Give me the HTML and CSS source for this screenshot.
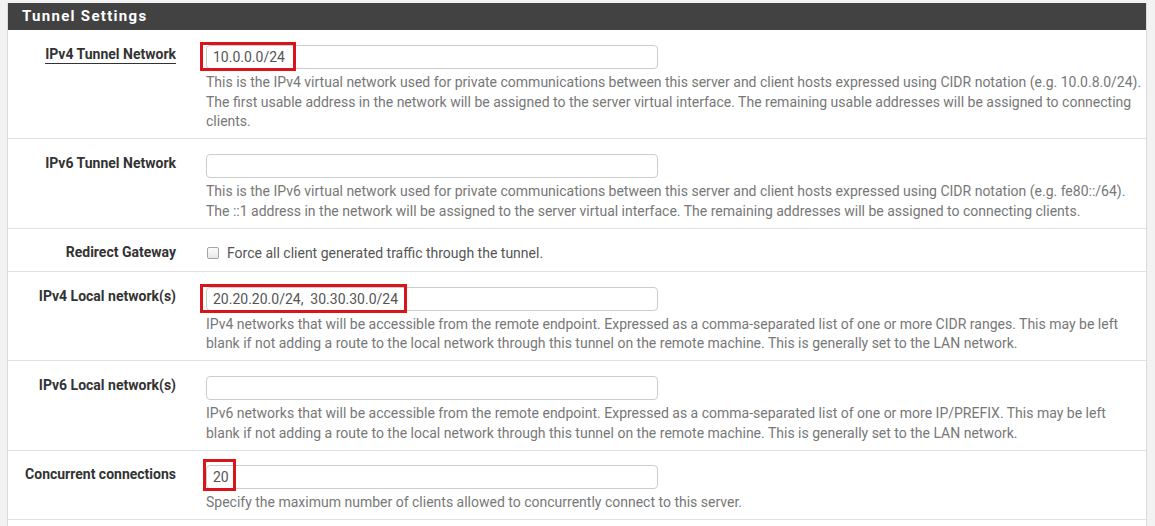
FILE: index.html
```html
<!DOCTYPE html>
<html>
<head>
<meta charset="utf-8">
<link rel="stylesheet" href="styles.css">
</head>
<body>
<div class="panel">
  <div class="panel-heading">Tunnel Settings</div>
  <div class="panel-body">
    <div class="row">
      <div class="label"><span class="underline">IPv4 Tunnel Network</span></div>
      <div class="control">
        <div class="field hl hl-1"><input class="input" type="text" value="10.0.0.0/24"></div>
        <div class="help">This is the IPv4 virtual network used for private communications between this server and client hosts expressed using CIDR notation (e.g. 10.0.8.0/24). The first usable address in the network will be assigned to the server virtual interface. The remaining usable addresses will be assigned to connecting clients.</div>
      </div>
    </div>
    <div class="row">
      <div class="label">IPv6 Tunnel Network</div>
      <div class="control">
        <div class="field"><input class="input" type="text" value=""></div>
        <div class="help">This is the IPv6 virtual network used for private communications between this server and client hosts expressed using CIDR notation (e.g. fe80::/64). The ::1 address in the network will be assigned to the server virtual interface. The remaining addresses will be assigned to connecting clients.</div>
      </div>
    </div>
    <div class="row row-check">
      <div class="label">Redirect Gateway</div>
      <div class="control">
        <label class="check"><span class="box"></span>Force all client generated traffic through the tunnel.</label>
      </div>
    </div>
    <div class="row">
      <div class="label">IPv4 Local network(s)</div>
      <div class="control">
        <div class="field hl hl-4"><input class="input" type="text" value="20.20.20.0/24,  30.30.30.0/24"></div>
        <div class="help">IPv4 networks that will be accessible from the remote endpoint. Expressed as a comma-separated list of one or more CIDR ranges. This may be left<br>blank if not adding a route to the local network through this tunnel on the remote machine. This is generally set to the LAN network.</div>
      </div>
    </div>
    <div class="row">
      <div class="label">IPv6 Local network(s)</div>
      <div class="control">
        <div class="field"><input class="input" type="text" value=""></div>
        <div class="help">IPv6 networks that will be accessible from the remote endpoint. Expressed as a comma-separated list of one or more IP/PREFIX. This may be left<br>blank if not adding a route to the local network through this tunnel on the remote machine. This is generally set to the LAN network.</div>
      </div>
    </div>
    <div class="row row-last">
      <div class="label">Concurrent connections</div>
      <div class="control">
        <div class="field hl hl-6"><input class="input" type="text" value="20"></div>
        <div class="help">Specify the maximum number of clients allowed to concurrently connect to this server.</div>
      </div>
    </div>
    <div class="row row-next"></div>
  </div>
</div>
</body>
</html>
```

FILE: styles.css
```css
html, body {
  margin: 0;
  padding: 0;
}
body {
  background: #f2f2f2;
  font-family: Roboto, "Liberation Sans", Arial, sans-serif;
  font-size: 14px;
  color: #333;
  padding: 3px 8px 0 7px;
}
.panel {
  background: #fff;
  border-left: 1px solid #dcdcdc;
  border-right: 1px solid #dcdcdc;
}
.panel-heading {
  background: #424242;
  color: #fff;
  font-weight: bold;
  font-size: 15px;
  letter-spacing: 1.3px;
  height: 27px;
  line-height: 27px;
  padding-left: 14px;
}
.row {
  display: grid;
  grid-template-columns: 183px 1fr;
  border-bottom: 1px solid #e0e0e0;
  padding: 15px 0 6.5px;
}
.row-check {
  padding: 14px 0 8px;
}
.row-last {
  padding-top: 14.5px;
}
.row-next {
  border-bottom: none;
  height: 12px;
  padding: 0;
}
.label {
  text-align: right;
  padding-right: 15px;
  font-weight: bold;
  line-height: 18px;
  color: #333;
}
.underline {
  border-bottom: 1px solid #333;
  padding-bottom: 1px;
}
.control {
  padding-left: 15px;
  padding-right: 2px;
}
.field {
  width: 452px;
  position: relative;
}
.input {
  box-sizing: border-box;
  width: 452px;
  height: 24px;
  border: 1px solid #ccc;
  border-radius: 4px;
  padding: 0 6px;
  font-family: Roboto, "Liberation Sans", Arial, sans-serif;
  font-size: 14px;
  color: #555;
  background: #fff;
  display: block;
  outline: none;
}
.hl::after {
  content: "";
  position: absolute;
  border: 3px solid #d9141a;
  top: -3px;
  bottom: -2px;
  left: -6px;
}
.hl-1::after { width: 90px; }
.hl-4::after { width: 201px; }
.hl-6::after { width: 27px; left: -3px; top: -6px; }
.help {
  margin-top: 4px;
  line-height: 19.5px;
  color: #777;
}
.check {
  display: flex;
  align-items: center;
  line-height: 20px;
  color: #555;
}
.box {
  box-sizing: border-box;
  width: 12px;
  height: 12px;
  border: 1px solid #a5a5a5;
  border-radius: 2px;
  background: linear-gradient(#fcfcfc, #e8e8e8);
  margin: 0 8px 0 1px;
}
```
